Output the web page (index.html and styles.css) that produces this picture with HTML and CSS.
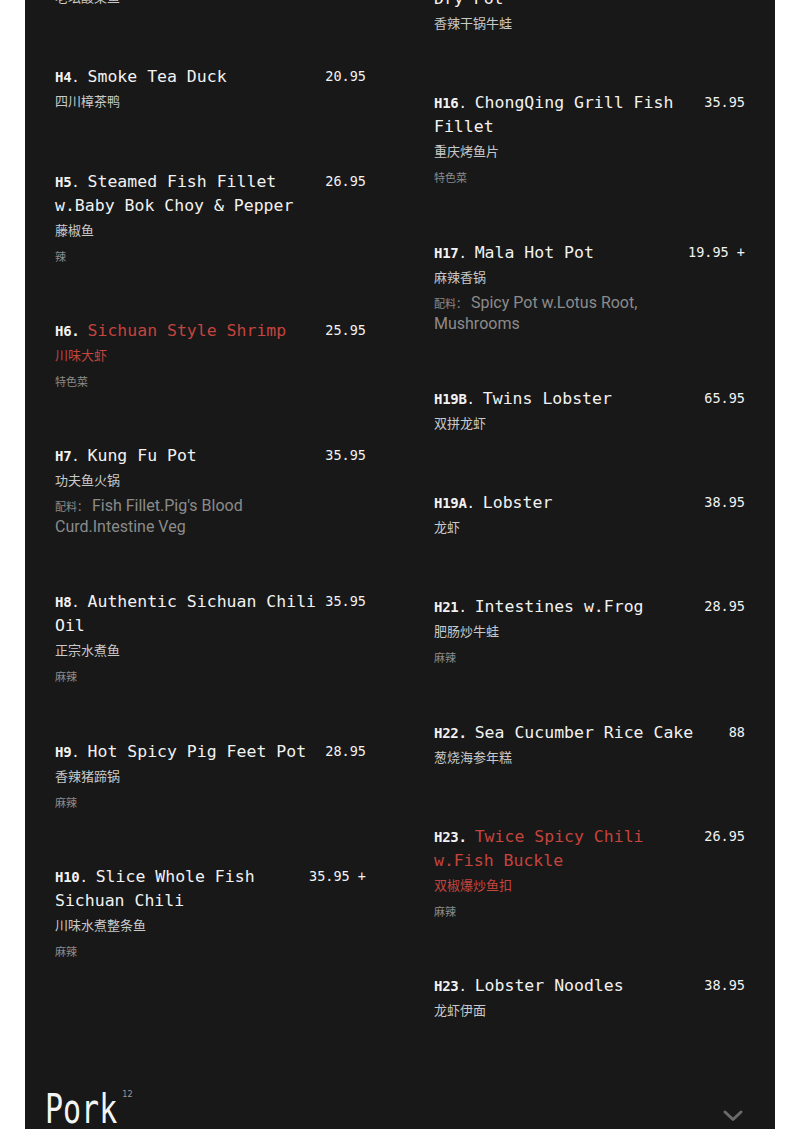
FILE: index.html
```html
<!DOCTYPE html>
<html lang="en">
<head>
<meta charset="utf-8">
<title>Menu</title>
<link rel="stylesheet" href="styles.css">
</head>
<body>
<main class="card">
  <div class="menu-grid">
    <div class="col">
      <div class="item">
        <div class="item-head"><h3 class="title"><span class="code"><b>H3</b>. </span>Pickled Cabbage Fish</h3><span class="price">32.95</span></div>
        <p class="zh">老坛酸菜鱼</p>
        <p class="desc"></p>
      </div>
      <div class="item">
        <div class="item-head"><h3 class="title"><span class="code"><b>H4</b>. </span>Smoke Tea Duck</h3><span class="price">20.95</span></div>
        <p class="zh">四川樟茶鸭</p>
        <p class="desc"></p>
      </div>
      <div class="item">
        <div class="item-head"><h3 class="title"><span class="code"><b>H5</b>. </span>Steamed Fish Fillet w.Baby Bok Choy &amp; Pepper</h3><span class="price">26.95</span></div>
        <p class="zh">藤椒鱼</p>
        <p class="desc"><span class="cjk">辣</span></p>
      </div>
      <div class="item hot">
        <div class="item-head"><h3 class="title"><span class="code"><b>H6.</b> </span><span class="name">Sichuan Style Shrimp</span></h3><span class="price">25.95</span></div>
        <p class="zh">川味大虾</p>
        <p class="desc"><span class="cjk">特色菜</span></p>
      </div>
      <div class="item">
        <div class="item-head"><h3 class="title"><span class="code"><b>H7</b>. </span>Kung Fu Pot</h3><span class="price">35.95</span></div>
        <p class="zh">功夫鱼火锅</p>
        <p class="desc"><span class="cjk">配料：</span> Fish Fillet.Pig's Blood Curd.Intestine Veg</p>
      </div>
      <div class="item">
        <div class="item-head"><h3 class="title"><span class="code"><b>H8</b>. </span>Authentic Sichuan Chili Oil</h3><span class="price">35.95</span></div>
        <p class="zh">正宗水煮鱼</p>
        <p class="desc"><span class="cjk">麻辣</span></p>
      </div>
      <div class="item">
        <div class="item-head"><h3 class="title"><span class="code"><b>H9</b>. </span>Hot Spicy Pig Feet Pot</h3><span class="price">28.95</span></div>
        <p class="zh">香辣猪蹄锅</p>
        <p class="desc"><span class="cjk">麻辣</span></p>
      </div>
      <div class="item">
        <div class="item-head"><h3 class="title"><span class="code"><b>H10</b>. </span>Slice Whole Fish Sichuan Chili</h3><span class="price">35.95 +</span></div>
        <p class="zh">川味水煮整条鱼</p>
        <p class="desc"><span class="cjk">麻辣</span></p>
      </div>
    </div>
    <div class="col col-right">
      <div class="item">
        <div class="item-head"><h3 class="title"><span class="code"><b>H15</b>. </span>Griddle Cooked Frog Dry Pot</h3><span class="price">32.95</span></div>
        <p class="zh">香辣干锅牛蛙</p>
        <p class="desc"></p>
      </div>
      <div class="item">
        <div class="item-head"><h3 class="title"><span class="code"><b>H16</b>. </span>ChongQing Grill Fish Fillet</h3><span class="price">35.95</span></div>
        <p class="zh">重庆烤鱼片</p>
        <p class="desc"><span class="cjk">特色菜</span></p>
      </div>
      <div class="item">
        <div class="item-head"><h3 class="title"><span class="code"><b>H17</b>. </span>Mala Hot Pot</h3><span class="price">19.95 +</span></div>
        <p class="zh">麻辣香锅</p>
        <p class="desc"><span class="cjk">配料：</span> Spicy Pot w.Lotus Root, Mushrooms</p>
      </div>
      <div class="item">
        <div class="item-head"><h3 class="title"><span class="code"><b>H19B</b>. </span>Twins Lobster</h3><span class="price">65.95</span></div>
        <p class="zh">双拼龙虾</p>
        <p class="desc"></p>
      </div>
      <div class="item">
        <div class="item-head"><h3 class="title"><span class="code"><b>H19A</b>. </span>Lobster</h3><span class="price">38.95</span></div>
        <p class="zh">龙虾</p>
        <p class="desc"></p>
      </div>
      <div class="item">
        <div class="item-head"><h3 class="title"><span class="code"><b>H21</b>. </span>Intestines w.Frog</h3><span class="price">28.95</span></div>
        <p class="zh">肥肠炒牛蛙</p>
        <p class="desc"><span class="cjk">麻辣</span></p>
      </div>
      <div class="item">
        <div class="item-head"><h3 class="title"><span class="code"><b>H22.</b> </span>Sea Cucumber Rice Cake</h3><span class="price">88</span></div>
        <p class="zh">葱烧海参年糕</p>
        <p class="desc"></p>
      </div>
      <div class="item hot">
        <div class="item-head"><h3 class="title"><span class="code"><b>H23.</b> </span><span class="name">Twice Spicy Chili w.Fish Buckle</span></h3><span class="price">26.95</span></div>
        <p class="zh">双椒爆炒鱼扣</p>
        <p class="desc"><span class="cjk">麻辣</span></p>
      </div>
      <div class="item">
        <div class="item-head"><h3 class="title"><span class="code"><b>H23</b>. </span>Lobster Noodles</h3><span class="price">38.95</span></div>
        <p class="zh">龙虾伊面</p>
        <p class="desc"></p>
      </div>
    </div>
  </div>
  <div class="section-head">
    <h2 class="section-title"><span class="section-name">Pork</span><span class="count">12</span></h2>
    <svg class="chevron" width="22" height="14" viewBox="0 0 22 14" aria-hidden="true">
      <path d="M3 3 L11 10.5 L19 3" fill="none" stroke="#6a6a6a" stroke-width="3" stroke-linecap="round" stroke-linejoin="round"/>
    </svg>
  </div>
</main>
</body>
</html>
```

FILE: styles.css
```css
html, body {
  margin: 0;
  padding: 0;
  background: #ffffff;
}

body {
  overflow: hidden;
  height: 1129px;
}

.card {
  margin: -39px 25px 0;
  background: #181818;
  padding: 0 30px 60px;
  color: #f2f2f2;
  font-family: "DejaVu Sans Mono", "Liberation Mono", monospace;
}

.menu-grid {
  display: grid;
  grid-template-columns: 1fr 1fr;
  column-gap: 68px;
  align-items: start;
}

.col {
  display: flex;
  flex-direction: column;
  gap: 53.3px;
}

.col-right {
  padding-top: 2px;
}

.item-head {
  display: flex;
  align-items: flex-start;
}

.title {
  flex: 1;
  min-width: 0;
  margin: 0;
  font-size: 16.5px;
  line-height: 24px;
  font-weight: normal;
  color: #f2f2f2;
}

.code {
  font-size: 14px;
  line-height: 1;
  letter-spacing: -0.3px;
}

.code b {
  font-weight: bold;
}

.hot .name,
.hot .zh {
  color: #c4443e;
}

.price {
  flex: none;
  margin-left: 6px;
  font-size: 13.5px;
  line-height: 23px;
  color: #f2f2f2;
  white-space: pre;
}

.zh {
  margin: 0;
  font-family: "Noto Sans CJK SC", "Noto Sans", sans-serif;
  font-size: 13px;
  line-height: 24px;
  color: #c9c9c9;
}

.desc {
  margin: 3px 0 0;
  max-width: 262px;
  font-family: Roboto, "Noto Sans CJK SC", sans-serif;
  font-size: 16px;
  line-height: 21px;
  color: #8b8b8b;
}

.desc .cjk {
  font-family: "Noto Sans CJK SC", sans-serif;
  font-size: 11px;
  line-height: 1;
}

.desc:empty {
  height: 0;
}

.section-head {
  display: flex;
  justify-content: space-between;
  align-items: flex-start;
  margin: 72px -30px 0;
  padding: 0 31px 0 20px;
}

.section-title {
  margin: 0;
  display: flex;
  align-items: flex-start;
  font-weight: normal;
}

.section-name {
  display: inline-block;
  font-size: 30px;
  line-height: normal;
  color: #f4f4f4;
  transform: scaleY(1.35);
  transform-origin: 50% 100%;
}

.count {
  margin: -8px 0 0 5px;
  font-family: "DejaVu Sans Condensed", "DejaVu Sans", sans-serif;
  font-size: 9px;
  color: #9a9a9a;
}

.chevron {
  margin-top: 12px;
}
```
